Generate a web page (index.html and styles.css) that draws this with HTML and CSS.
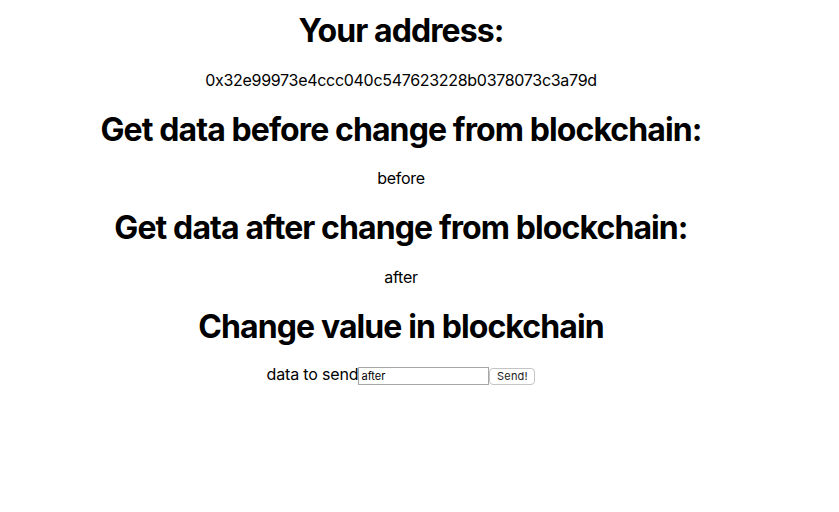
FILE: index.html
```html
<!DOCTYPE html>
<html lang="en">
<head>
<meta charset="utf-8">
<title>Blockchain</title>
<link rel="stylesheet" href="styles.css">
</head>
<body>
<div class="app">
  <h1 class="title first">Your address:</h1>
  <p class="value">0x32e99973e4ccc040c547623228b0378073c3a79d</p>
  <h1 class="title">Get data before change from blockchain:</h1>
  <p class="value">before</p>
  <h1 class="title">Get data after change from blockchain:</h1>
  <p class="value">after</p>
  <h1 class="title">Change value in blockchain</h1>
  <p class="value form-row">data to send<input class="field" type="text" value="after"><button class="send" type="button">Send!</button></p>
</div>
</body>
</html>
```
FILE: styles.css
```css
html, body {
  margin: 0;
  padding: 0;
  background: #fff;
}
body {
  font-family: Inter, "Liberation Sans", sans-serif;
  color: #000;
}
.app {
  width: 802px;
  padding-top: 11px;
  text-align: center;
}
.title {
  font-size: 32px;
  font-weight: 700;
  letter-spacing: -0.9px;
  margin: 19.8px 0;
  line-height: normal;
}
.title.first {
  margin-top: 0;
}
.value {
  font-size: 16px;
  letter-spacing: -0.3px;
  margin: 16px 0;
  line-height: normal;
}
.value.form-row {
  letter-spacing: -0.15px;
  margin-top: -1.5px;
}
.field {
  width: 131px;
  height: 18px;
  box-sizing: border-box;
  font-family: Inter, "Liberation Sans", sans-serif;
  font-size: 11px;
  letter-spacing: 0;
  padding: 1px 2px;
  margin: 0;
  border: 1px solid #a7a7a7;
  border-radius: 0;
  color: #000;
  vertical-align: baseline;
}
.send {
  width: 46px;
  height: 17px;
  box-sizing: border-box;
  font-family: Inter, "Liberation Sans", sans-serif;
  font-size: 11px;
  letter-spacing: 0.2px;
  padding: 0 4px;
  margin: 0;
  border: 1px solid #c4c4c4;
  border-radius: 4px;
  background: #fff;
  color: #222;
}
```
